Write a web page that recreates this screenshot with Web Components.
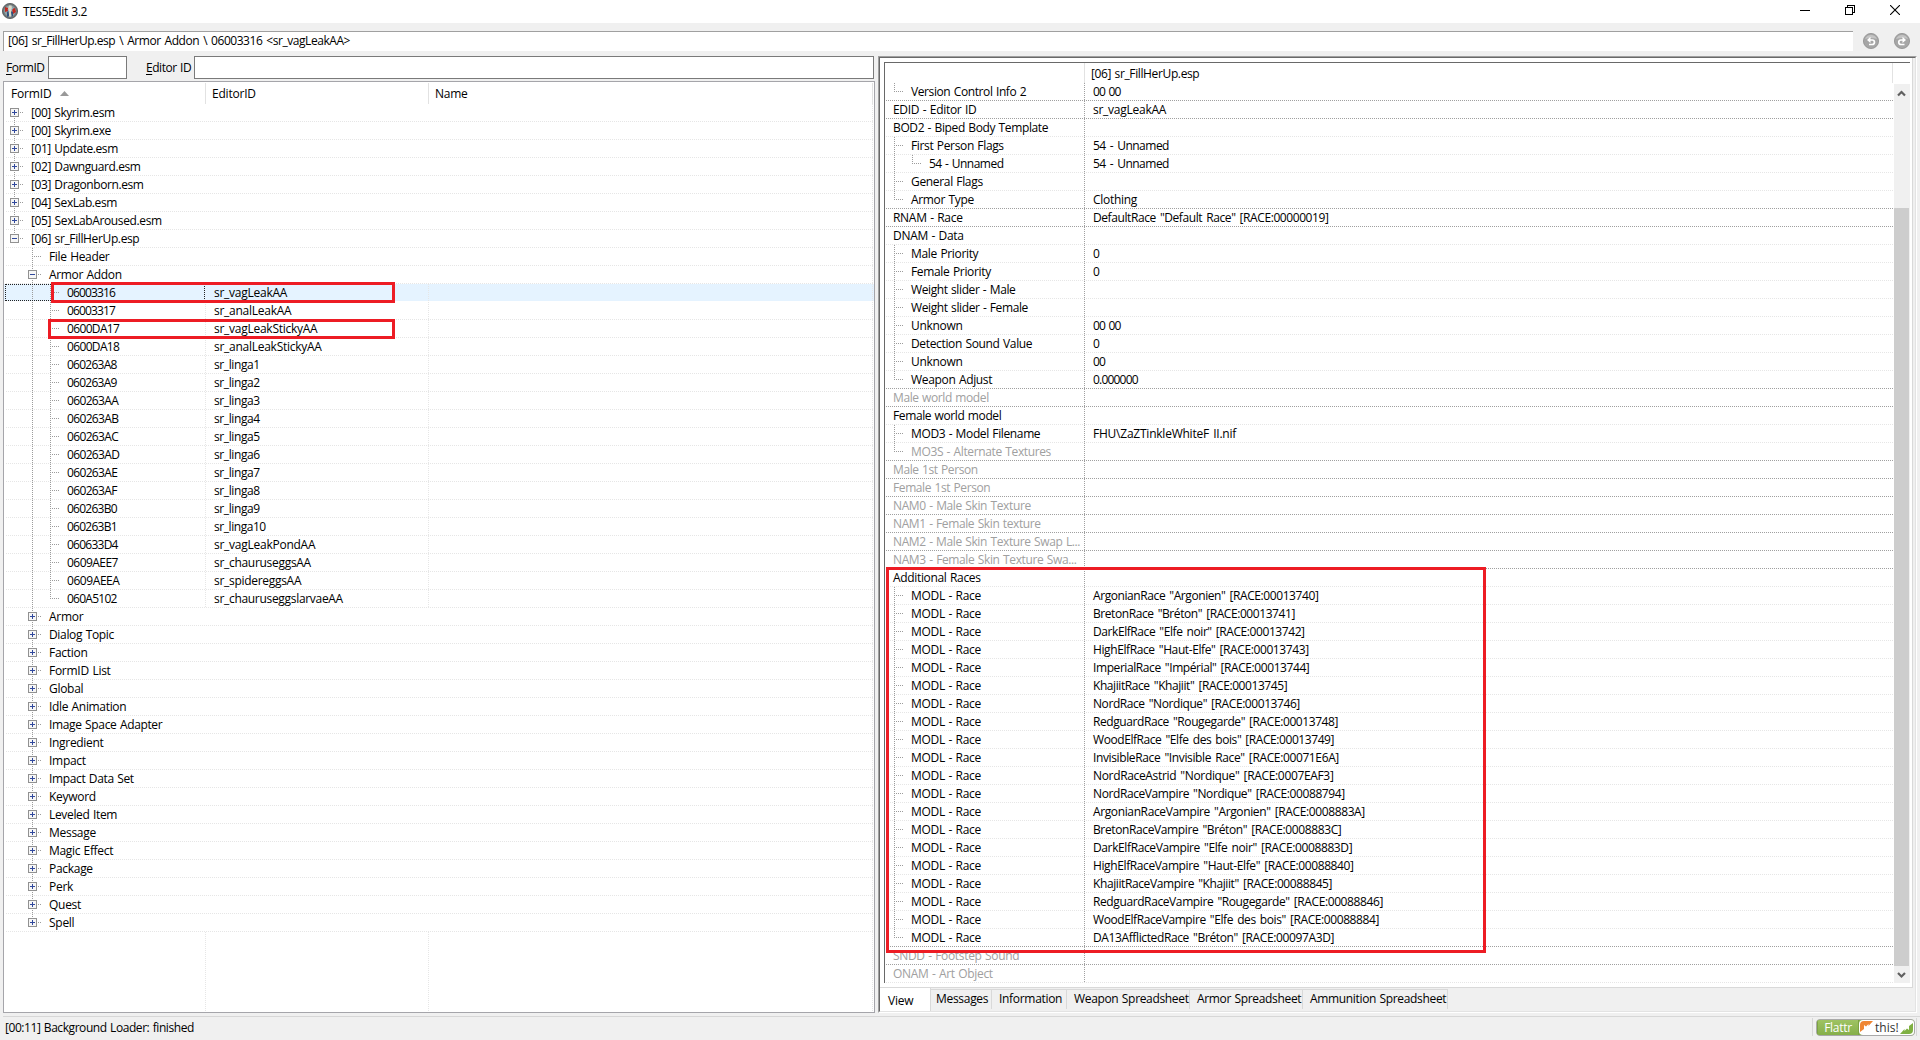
<!DOCTYPE html>
<html lang="en">
<head>
<meta charset="utf-8">
<title>TES5Edit 3.2</title>
<style>
  html, body {
    margin: 0;
    height: 100%;
    overflow: hidden;
  }
  body {
    background: #f0f0f0;
    color: #000;
    font: 12px/16px "Open Sans", "Noto Sans", sans-serif;
  }
</style>
</head>
<body>
<xe-window></xe-window>

<script>
const define = (name, html, setup) => {
  const template = document.createElement('template');
  template.innerHTML = html;
  customElements.define(name, class extends HTMLElement {
    connectedCallback() {
      if (this.shadowRoot) return;
      this.attachShadow({ mode: 'open' }).append(template.content.cloneNode(true));
      if (setup) setup(this, this.shadowRoot);
    }
  });
};

const escapeHtml = (text) => text.replace(/&/g, '&amp;').replace(/</g, '&lt;').replace(/>/g, '&gt;');
const label = (text) => `<ui-text>${escapeHtml(text)}</ui-text>`;

// Text run, tightened according to its mix of digits, capitals and lower case
define('ui-text', `
  <style>
    :host { display: block; white-space: nowrap; height: 16px; line-height: 16px; word-spacing: 0.7px; }
    ::slotted(u) { text-underline-offset: 2px; text-decoration-thickness: 1px; }
  </style>
  <slot></slot>
`, (host) => {
  const text = host.textContent;
  const digits = (text.match(/[0-9]/g) || []).length;
  const caps = (text.match(/[A-Z]/g) || []).length;
  const spaces = (text.match(/ /g) || []).length;
  const rest = text.length - digits - caps;
  host.style.letterSpacing = `${-(digits * 0.86 + rest * 0.34 + spaces * 0.6) / text.length}px`;
});

define('title-bar', `
  <style>
    :host { display: flex; flex: none; height: 23px; background: #fff; align-items: flex-start; }
    .logo { margin: 3px 6px 0 2px; }
    ui-text { margin: 4px 0 0 -1px; flex: 1; }
    .buttons { display: flex; gap: 35px; margin: 5px 20px 0 0; }
    .buttons svg { display: block; }
  </style>
  <svg class="logo" width="16" height="16" viewBox="0 0 16 16">
    <circle cx="8" cy="8" r="7.6" fill="#6f7678" stroke="#4b4f50" stroke-width=".8"/>
    <circle cx="8" cy="8" r="5.8" fill="#8fa3a8"/>
    <path d="M3 4l3 1v3L3 9zM10 6l3-1 1 4-3 2z" fill="#c2281f"/>
    <path d="M5 9l2-2v6l-2 1zM9 8l2 1v4l-2 1z" fill="#33507a"/>
    <path d="M7 2.5h2.5l.5 3-1 4 .6 4H7.2l-.4-4-.6-4z" fill="#dcd9c6"/>
    <path d="M6 6.5l1 2M10.5 5l-1 2.500" stroke="#7fb7d8" fill="none"/>
  </svg>
  <ui-text>TES5Edit 3.2</ui-text>
  <div class="buttons">
    <svg width="10" height="10" shape-rendering="crispEdges"><path d="M0 5.500h10" stroke="#000"/></svg>
    <svg width="10" height="10" shape-rendering="crispEdges"><path d="M.5 2.500h7v7h-7zM2.500 2V.5h7v7H8" fill="none" stroke="#000"/></svg>
    <svg width="10" height="10"><path d="M0 0l10 10M10 0L0 10" stroke="#000" stroke-width="1.100"/></svg>
  </div>
`);

define('address-bar', `
  <style>
    :host { display: flex; flex: none; box-sizing: border-box; height: 28px; padding: 8px 10px 0 3px; align-items: flex-start; }
    .path { flex: 1; height: 19px; background: #fff; border: solid #a0a0a0; border-width: 1px 0 0 1px; padding-left: 4px; }
    .path ui-text { margin-top: 1px; word-spacing: 1.3px; }
    .nav { display: flex; gap: 15px; margin: 2px 0 0 10px; }
    .nav svg { display: block; }
  </style>
  <div class="path"><ui-text>[06] sr_FillHerUp.esp \\ Armor Addon \\ 06003316 &lt;sr_vagLeakAA&gt;</ui-text></div>
  <div class="nav">
    <svg width="16" height="16" viewBox="0 0 16 16">
      <circle cx="8" cy="8" r="7.600" fill="#a6a6a6" stroke="#8f8f8f" stroke-width=".8"/>
      <path d="M2 6a6.500 6.500 0 0 1 12 0q-6-2-12 0z" fill="#c4c4c4"/>
      <path d="M6 11.500h3.200a2.200 2.200 0 0 0 0-4.500H6" fill="none" stroke="#fff" stroke-width="1.700"/>
      <path d="M7.500 3.800v6.200L4 7z" fill="#fff"/>
    </svg>
    <svg width="16" height="16" viewBox="0 0 16 16">
      <circle cx="8" cy="8" r="7.600" fill="#a6a6a6" stroke="#8f8f8f" stroke-width=".8"/>
      <path d="M2 6a6.500 6.500 0 0 1 12 0q-6-2-12 0z" fill="#c4c4c4"/>
      <path d="M10.500 11.500H7a2.200 2.200 0 0 1 0-4.500h3" fill="none" stroke="#fff" stroke-width="1.700"/>
      <path d="M8.500 3.800v6.200L12 7z" fill="#fff"/>
    </svg>
  </div>
`);

define('filter-bar', `
  <style>
    :host { display: flex; height: 23px; padding-left: 3px; }
    .box { box-sizing: border-box; border: 1px solid #7a7a7a; background: #fff; height: 23px; }
    .id { width: 79px; }
    .editor { flex: 1; }
    ui-text { margin-top: 4px; }
    .l1 { width: 42px; letter-spacing: -0.5px !important; }
    .l2 { width: 48px; margin-left: 19px; letter-spacing: -0.45px !important; }
  </style>
  <ui-text class="l1"><u>F</u>ormID</ui-text><div class="box id"></div>
  <ui-text class="l2"><u>E</u>ditor ID</ui-text><div class="box editor"></div>
`);

// One level of the connecting lines: shape is full, first, last, tee or blank
define('tree-guide', `
  <style>
    :host {
      --dot: #9c9c9c;
      --v: repeating-linear-gradient(to bottom, var(--dot) 0 1px, transparent 1px 2px);
      --h: repeating-linear-gradient(to right, var(--dot) 0 1px, transparent 1px 2px);
      display: flex; flex: none; width: 18px; height: 18px; background-repeat: no-repeat;
    }
    :host([shape="full"]) { background-image: var(--v); background-size: 1px 18px; background-position: 4px 0; }
    :host([shape="tee"]) { background-image: var(--v), var(--h); background-size: 1px 18px, 10px 1px; background-position: 4px 0, 4px 8px; }
    :host([shape="last"]) { background-image: var(--v), var(--h); background-size: 1px 9px, 10px 1px; background-position: 4px 0, 4px 8px; }
    :host([shape="first"]) { background-image: var(--v), var(--h); background-size: 1px 10px, 10px 1px; background-position: 4px 8px, 4px 8px; }
    svg { display: none; margin-top: 4px; }
    :host([box]) svg { display: block; }
    :host([box="minus"]) .bar { display: none; }
  </style>
  <svg width="9" height="9" shape-rendering="crispEdges">
    <rect x=".5" y=".5" width="8" height="8" fill="#f6f6f6" stroke="#919191"/>
    <path d="M2 4.500h5" stroke="#30489c"/>
    <path class="bar" d="M4.500 2v5" stroke="#30489c"/>
  </svg>
`);

// rows: [depth, text, value, flags]; rootLines adds a guide for depth 0
const guides = (rows, i, rootLines) => {
  const depth = rows[i][0];
  const continues = (level) => {
    for (let j = i + 1; j < rows.length && rows[j][0] >= level; j++) {
      if (rows[j][0] === level) return true;
    }
    return false;
  };
  let html = '';
  for (let level = rootLines ? 0 : 1; level <= depth; level++) {
    const more = continues(level);
    let shape = more ? 'full' : 'blank';
    if (level === depth) shape = more ? (i === 0 && rootLines ? 'first' : 'tee') : 'last';
    const flag = rows[i][3];
    const box = level === depth && (flag === 'plus' || flag === 'minus') ? ` box="${flag}"` : '';
    html += `<tree-guide shape="${shape}"${box}></tree-guide>`;
  }
  return html;
};

const treeRows = [
  ...['[00] Skyrim.esm', '[00] Skyrim.exe', '[01] Update.esm', '[02] Dawnguard.esm', '[03] Dragonborn.esm',
    '[04] SexLab.esm', '[05] SexLabAroused.esm'].map((t) => [0, t, '', 'plus']),
  [0, '[06] sr_FillHerUp.esp', '', 'minus'],
  [1, 'File Header', ''],
  [1, 'Armor Addon', '', 'minus'],
  [2, '06003316', 'sr_vagLeakAA', 'selected'],
  [2, '06003317', 'sr_analLeakAA'],
  [2, '0600DA17', 'sr_vagLeakStickyAA'],
  [2, '0600DA18', 'sr_analLeakStickyAA'],
  [2, '060263A8', 'sr_linga1'],
  [2, '060263A9', 'sr_linga2'],
  [2, '060263AA', 'sr_linga3'],
  [2, '060263AB', 'sr_linga4'],
  [2, '060263AC', 'sr_linga5'],
  [2, '060263AD', 'sr_linga6'],
  [2, '060263AE', 'sr_linga7'],
  [2, '060263AF', 'sr_linga8'],
  [2, '060263B0', 'sr_linga9'],
  [2, '060263B1', 'sr_linga10'],
  [2, '060633D4', 'sr_vagLeakPondAA'],
  [2, '0609AEE7', 'sr_chauruseggsAA'],
  [2, '0609AEEA', 'sr_spidereggsAA'],
  [2, '060A5102', 'sr_chauruseggslarvaeAA'],
  ...['Armor', 'Dialog Topic', 'Faction', 'FormID List', 'Global', 'Idle Animation', 'Image Space Adapter',
    'Ingredient', 'Impact', 'Impact Data Set', 'Keyword', 'Leveled Item', 'Message', 'Magic Effect', 'Package',
    'Perk', 'Quest', 'Spell'].map((t) => [1, t, '', 'plus'])
];

define('plugin-tree', `
  <style>
    :host {
      --light-h: repeating-linear-gradient(to right, #e6e6e6 0 1px, transparent 1px 2px);
      --light-v: repeating-linear-gradient(to bottom, #e6e6e6 0 1px, transparent 1px 2px);
      display: flex; flex-direction: column; box-sizing: border-box; background: #fff; border: 1px solid #a5a5aa;
    }
    .header { display: grid; grid-template-columns: 202px 223px 444px; height: 22px; padding-top: 1px; box-sizing: border-box; }
    .header div { display: flex; border-right: 1px solid #e2e2e2; box-sizing: border-box; padding: 3px 0 0 6px; height: 21px; }
    .header div:first-child { padding-left: 7px; }
    .header svg { margin: 5px 0 0 10px; }
    .header .w { width: 39px; }
    .row {
      display: grid; grid-template-columns: 202px 223px 444px; height: 18px;
      background: var(--light-h) 2px 17px / 867px 1px no-repeat, var(--light-v) 868px 0 / 1px 18px no-repeat;
    }
    .cell { display: flex; padding-left: 6px; box-sizing: border-box; }
    .cell ui-text { margin: 1px 0 0 3px; }
    .value { padding-left: 5px; }
    .leaf .cell { background: var(--light-v) right 0 top 0 / 1px 18px no-repeat; }
    .selected { background: #e5f3ff; background-clip: content-box; padding-bottom: 1px; height: 17px; }
    .selected .focus { outline: 1px dotted #222; outline-offset: -1px; margin: 0 1px 0 1px; padding-left: 5px; height: 17px; }
    .blank {
      flex: 1;
      background: var(--light-v) 201px 0 / 1px 100% no-repeat, var(--light-v) 424px 0 / 1px 100% no-repeat,
        var(--light-v) 868px 0 / 1px 100% no-repeat;
    }
  </style>
  <div class="header">
    <div><ui-text class="w">FormID</ui-text><svg width="10" height="5"><path d="M0 5L4.500 0 9 5z" fill="#999"/></svg></div>
    <div><ui-text>EditorID</ui-text></div>
    <div><ui-text>Name</ui-text></div>
  </div>
  <div class="rows"></div>
  <div class="blank"></div>
`, (host, root) => {
  root.querySelector('.rows').innerHTML = treeRows.map((row, i) => {
    const [, text, value, flag] = row;
    const selected = flag === 'selected';
    return `<div class="row${value ? ' leaf' : ''}${selected ? ' selected' : ''}">
      <div class="cell${selected ? ' focus' : ''}">${guides(treeRows, i, true)}${label(text)}</div>
      <div class="cell value">${value ? label(value) : ''}</div>
      <div class="cell"></div>
    </div>`;
  }).join('');
});

const modl = [
  'ArgonianRace "Argonien" [RACE:00013740]', 'BretonRace "Bréton" [RACE:00013741]',
  'DarkElfRace "Elfe noir" [RACE:00013742]', 'HighElfRace "Haut-Elfe" [RACE:00013743]',
  'ImperialRace "Impérial" [RACE:00013744]', 'KhajiitRace "Khajiit" [RACE:00013745]',
  'NordRace "Nordique" [RACE:00013746]', 'RedguardRace "Rougegarde" [RACE:00013748]',
  'WoodElfRace "Elfe des bois" [RACE:00013749]', 'InvisibleRace "Invisible Race" [RACE:00071E6A]',
  'NordRaceAstrid "Nordique" [RACE:0007EAF3]', 'NordRaceVampire "Nordique" [RACE:00088794]',
  'ArgonianRaceVampire "Argonien" [RACE:0008883A]', 'BretonRaceVampire "Bréton" [RACE:0008883C]',
  'DarkElfRaceVampire "Elfe noir" [RACE:0008883D]', 'HighElfRaceVampire "Haut-Elfe" [RACE:00088840]',
  'KhajiitRaceVampire "Khajiit" [RACE:00088845]', 'RedguardRaceVampire "Rougegarde" [RACE:00088846]',
  'WoodElfRaceVampire "Elfe des bois" [RACE:00088884]', 'DA13AfflictedRace "Bréton" [RACE:00097A3D]'
];

const recordRows = [
  [1, 'Version Control Info 2', '00 00'],
  [0, 'EDID - Editor ID', 'sr_vagLeakAA'],
  [0, 'BOD2 - Biped Body Template', ''],
  [1, 'First Person Flags', '54 - Unnamed'],
  [2, '54 - Unnamed', '54 - Unnamed'],
  [1, 'General Flags', ''],
  [1, 'Armor Type', 'Clothing'],
  [0, 'RNAM - Race', 'DefaultRace "Default Race" [RACE:00000019]'],
  [0, 'DNAM - Data', ''],
  [1, 'Male Priority', '0'],
  [1, 'Female Priority', '0'],
  [1, 'Weight slider - Male', ''],
  [1, 'Weight slider - Female', ''],
  [1, 'Unknown', '00 00'],
  [1, 'Detection Sound Value', '0'],
  [1, 'Unknown', '00'],
  [1, 'Weapon Adjust', '0.000000'],
  [0, 'Male world model', '', 'dim'],
  [0, 'Female world model', ''],
  [1, 'MOD3 - Model Filename', 'FHU\\ZaZTinkleWhiteF II.nif'],
  [1, 'MO3S - Alternate Textures', '', 'dim'],
  [0, 'Male 1st Person', '', 'dim'],
  [0, 'Female 1st Person', '', 'dim'],
  [0, 'NAM0 - Male Skin Texture', '', 'dim'],
  [0, 'NAM1 - Female Skin texture', '', 'dim'],
  [0, 'NAM2 - Male Skin Texture Swap L...', '', 'dim'],
  [0, 'NAM3 - Female Skin Texture Swa...', '', 'dim'],
  [0, 'Additional Races', ''],
  ...modl.map((value) => [1, 'MODL - Race', value]),
  [0, 'SNDD - Footstep Sound', '', 'dim'],
  [0, 'ONAM - Art Object', '', 'dim']
];

define('scroll-bar', `
  <style>
    :host { display: flex; flex-direction: column; width: 16px; background: #f0f0f0; }
    svg { display: block; flex: none; }
    .track { flex: 1; display: flex; flex-direction: column; justify-content: flex-end; }
    .thumb { height: 758px; width: 15px; background: #cdcdcd; }
  </style>
  <svg width="16" height="17"><path d="M4 11.500L7.500 8l3.500 3.500" fill="none" stroke="#606060" stroke-width="2.200"/></svg>
  <div class="track"><div class="thumb"></div></div>
  <svg width="16" height="17"><path d="M4 7l3.500 3.500L11 7" fill="none" stroke="#606060" stroke-width="2.200"/></svg>
`);

define('record-grid', `
  <style>
    :host {
      --dark-h: repeating-linear-gradient(to right, #a0a0a0 0 1px, transparent 1px 2px);
      --light-h: repeating-linear-gradient(to right, #e6e6e6 0 1px, transparent 1px 2px);
      --dark-v: repeating-linear-gradient(to bottom, #a0a0a0 0 1px, transparent 1px 2px);
      display: flex; flex-direction: column; background: #fff; border: solid #696969; border-width: 1px 0 0 1px;
    }
    .header { display: grid; grid-template-columns: 200px 808px 17px; height: 20px; }
    .header div { border-right: 1px solid #e2e2e2; box-sizing: border-box; padding: 3px 0 0 6px; height: 20px; }
    .header div:last-child { border: 0; }
    .body { display: flex; height: 900px; }
    .rows { width: 1008px; }
    .row { display: grid; grid-template-columns: 200px 808px; height: 18px; background: var(--light-h) 1px 17px / 1007px 1px no-repeat; }
    .row.end { background-image: var(--dark-h); }
    .cell { display: flex; padding-left: 5px; background: var(--dark-v) right 0 top 0 / 1px 18px no-repeat; }
    .cell ui-text { margin: 1px 0 0 3px; }
    .value { background: none; }
    .value ui-text { word-spacing: 1.4px; }
    .dim { color: #a0a0a0; }
    scroll-bar { margin: 1px 0 0 1px; height: 899px; }
  </style>
  <div class="header"><div></div><div><ui-text>[06] sr_FillHerUp.esp</ui-text></div><div></div></div>
  <div class="body"><div class="rows"></div><scroll-bar></scroll-bar></div>
`, (host, root) => {
  root.querySelector('.rows').innerHTML = recordRows.map((row, i) => {
    const next = recordRows[i + 1];
    return `<div class="row${next && next[0] === 0 ? ' end' : ''}">
      <div class="cell ${row[3] || ''}">${guides(recordRows, i, false)}${label(row[1])}</div>
      <div class="cell value">${row[2] ? label(row[2]) : ''}</div>
    </div>`;
  }).join('');
});

define('tab-strip', `
  <style>
    :host { display: flex; flex: 1; align-items: flex-start; }
    div { box-sizing: border-box; }
    .active { width: 51px; height: 23px; background: #fff; border-right: 1px solid #d9d9d9; padding: 5px 0 0 8px; }
    .tab { height: 20px; margin-top: 1px; border: solid #d9d9d9; border-width: 1px 1px 0 0; padding: 1px 0 0 5px; }
    .tab + .tab { padding-left: 7px; }
  </style>
  <div class="active"><ui-text>View</ui-text></div>
  <div class="tab" style="width:61px"><ui-text>Messages</ui-text></div>
  <div class="tab" style="width:75px"><ui-text>Information</ui-text></div>
  <div class="tab" style="width:123px"><ui-text>Weapon Spreadsheet</ui-text></div>
  <div class="tab" style="width:113px"><ui-text>Armor Spreadsheet</ui-text></div>
  <div class="tab" style="width:145px"><ui-text>Ammunition Spreadsheet</ui-text></div>
`);

define('page-control', `
  <style>
    :host {
      display: flex; flex-direction: column; box-sizing: border-box;
      border: 1px solid; border-color: #a0a0a0 #fff #fff #a0a0a0;
    }
    .inner {
      flex: 1; display: flex; flex-direction: column;
      border: 1px solid; border-color: #696969 #e3e3e3 #e3e3e3 #696969;
    }
    .page { background: #fff; border: solid #d9d9d9; border-width: 0 1px 1px 0; padding: 4px 0 0 4px; height: 925px; width: 1028px; }
    ::slotted(record-grid) { width: 1025px; height: 920px; }
  </style>
  <div class="inner">
    <div class="page"><slot></slot></div>
    <slot name="tabs"></slot>
  </div>
`);

define('flattr-badge', `
  <style>
    :host {
      display: flex; box-sizing: border-box; width: 99px; height: 17px; border: 1px solid #a9a9a9;
      border-radius: 4px; overflow: hidden; background: #84ae48; align-items: center;
    }
    .name { width: 42px; height: 17px; flex: none; background: linear-gradient(#a0c465, #84ae48); color: #fff; display: flex; justify-content: center; align-items: center; box-shadow: inset 0 0 0 1px #7da243; }
    .rest { display: flex; align-items: center; flex: 1; height: 15px; background: #fff; border-radius: 4px 0 0 4px; }
    .this { width: 25px; color: #333; margin-left: 2px; }
    .this ui-text { letter-spacing: 0 !important; }
    svg { display: block; flex: none; }
  </style>
  <div class="name"><ui-text>Flattr</ui-text></div>
  <div class="rest">
    <svg width="14" height="15"><path d="M1 12V5q0-4 4-4h9L9.500 6V4L7 6.500 5 5v4z" fill="#ef8632"/></svg>
    <div class="this"><ui-text>this!</ui-text></div>
    <svg width="14" height="15"><path d="M13 3v7q0 4-4 4H0l4.500-5v2L7 8.500 9 10V6z" fill="#7fb042"/></svg>
  </div>
`);

define('status-bar', `
  <style>
    :host { display: flex; flex: none; height: 24px; margin-left: 3px; border-top: 1px solid #d7d7d7; box-sizing: border-box; align-items: flex-start; }
    ui-text { flex: 1; margin: 3px 0 0 2px; }
    .panel { border: solid #d7d7d7; border-width: 0 1px; height: 18px; margin: 1px 3px 0 0; padding: 1px 0 0 3px; box-sizing: border-box; width: 105px; }
  </style>
  <ui-text>[00:11] Background Loader: finished</ui-text>
  <div class="panel"><flattr-badge></flattr-badge></div>
`);

// Red marker frame laid over the panels
define('mark-frame', `
  <style>
    :host { display: block; position: absolute; box-sizing: border-box; border: 3px solid #ed1c24; }
  </style>
`);

define('xe-window', `
  <style>
    :host { display: flex; flex-direction: column; position: relative; width: 1920px; height: 1040px; background: #f0f0f0; overflow: hidden; }
    .main { display: grid; flex: none; grid-template-columns: 872px 1039px; column-gap: 3px; margin: 5px 0 3px 3px; height: 957px; }
    .left { display: flex; flex-direction: column; gap: 2px; }
    filter-bar { width: 868px; }
    plugin-tree { height: 932px; }
    .m1 { left: 51px; top: 282px; width: 344px; height: 21px; }
    .m2 { left: 48px; top: 319px; width: 347px; height: 20px; }
    .m3 { left: 886px; top: 567px; width: 600px; height: 386px; }
  </style>
  <title-bar></title-bar>
  <address-bar></address-bar>
  <div class="main">
    <div class="left">
      <filter-bar></filter-bar>
      <plugin-tree></plugin-tree>
    </div>
    <page-control>
      <record-grid></record-grid>
      <tab-strip slot="tabs"></tab-strip>
    </page-control>
  </div>
  <status-bar></status-bar>
  <mark-frame class="m1"></mark-frame>
  <mark-frame class="m2"></mark-frame>
  <mark-frame class="m3"></mark-frame>
`);
</script>
</body>
</html>
